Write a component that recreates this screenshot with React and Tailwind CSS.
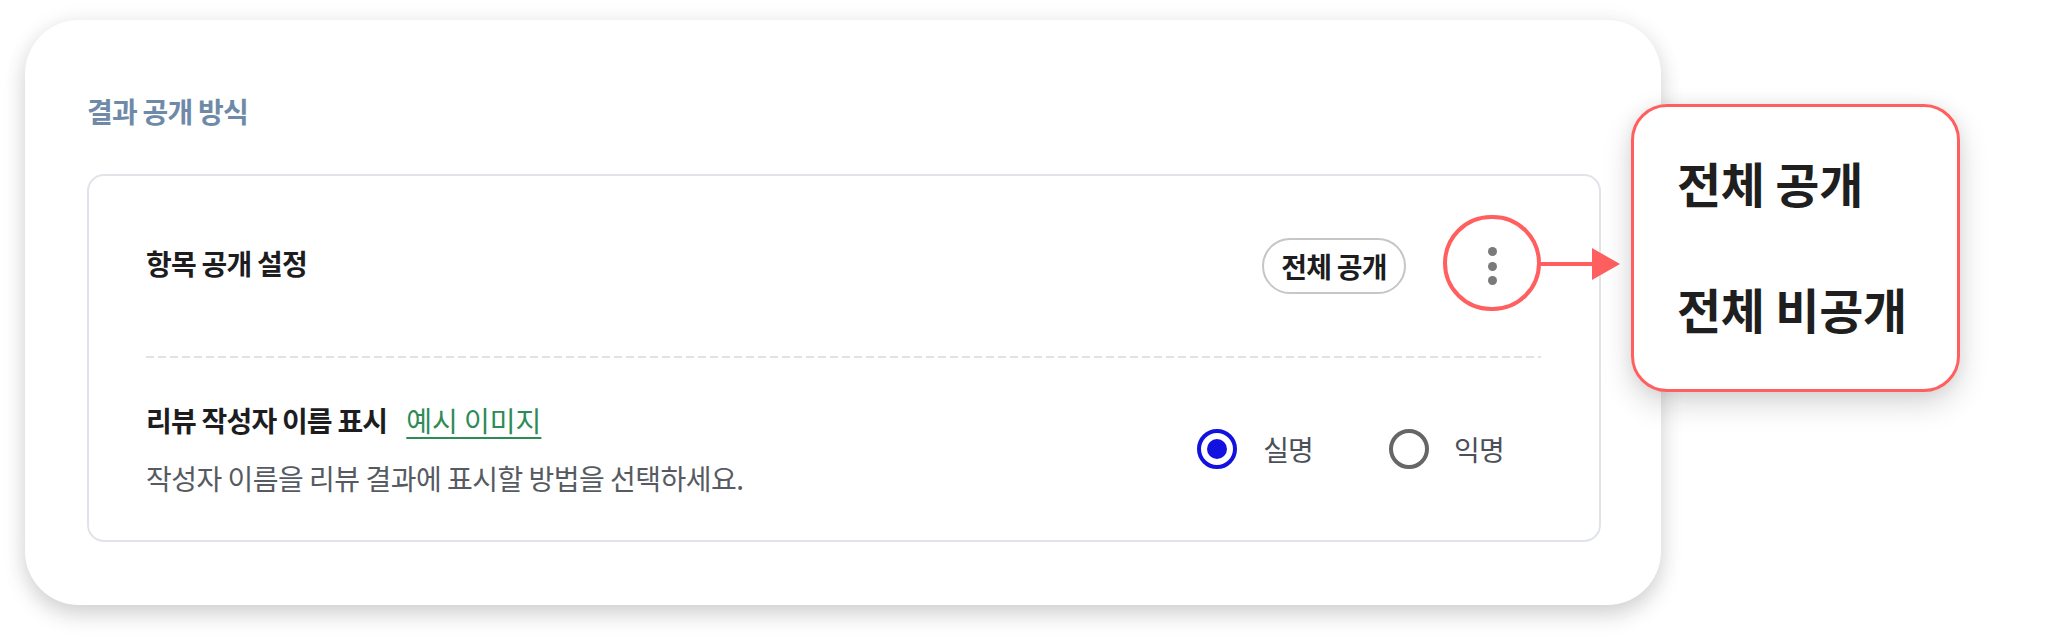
import React from "react";

const font = { fontFamily: '"Noto Sans CJK KR", "Noto Sans", sans-serif' };

export default function App() {
  return (
    <div className="min-h-screen bg-white pt-[20px] pl-[25px]" style={font}>
      <div className="w-[1636px] rounded-[54px] bg-white pt-[73px] pb-[63px] pl-[62px] pr-[60px] shadow-[0_10px_22px_rgba(0,0,0,0.16),0_0_24px_rgba(0,0,0,0.05)]">
        <h2 className="text-[28px] leading-[36px] font-bold tracking-[-0.8px] text-[#6f8aa8]">
          결과 공개 방식
        </h2>
        <div className="mt-[45px] rounded-[17px] border-2 border-[#e0e4e9] bg-white pt-[39px] pb-[44px] pl-[57px] pr-[58px]">
          <div className="flex h-[96px] items-center justify-between">
            <div className="text-[28px] leading-[36px] font-bold tracking-[-0.8px] text-[#1d1d1f]">
              항목 공개 설정
            </div>
            <div className="flex items-center gap-[37px]">
              <div className="mt-[6px] flex h-[56px] w-[144px] items-center justify-center rounded-full border-2 border-[#c6c6c6] text-[28px] font-bold tracking-[-0.8px] text-[#1d1d1f]">
                전체 공개
              </div>
              <div className="relative">
                <div className="flex h-[96px] w-[98px] items-center justify-center rounded-full border-[4px] border-[#ff605f]">
                  <div className="mt-[6px] flex flex-col items-center gap-[5.5px]">
                    <span className="h-[9px] w-[9px] rounded-full bg-[#7a7a7a]" />
                    <span className="h-[9px] w-[9px] rounded-full bg-[#7a7a7a]" />
                    <span className="h-[9px] w-[9px] rounded-full bg-[#7a7a7a]" />
                  </div>
                </div>
                <svg
                  className="absolute left-[96px] top-[32px]"
                  width="84"
                  height="34"
                  viewBox="0 0 84 34"
                >
                  <rect x="0" y="15" width="56" height="4" fill="#ff605f" />
                  <polygon points="53,1 81,17 53,33" fill="#ff605f" />
                </svg>
                <div className="absolute left-[188px] top-[-111px] z-10 flex h-[288px] w-[329px] flex-col justify-center gap-[76px] rounded-[36px] border-[3px] border-[#ff605f] bg-white pl-[43px] shadow-[0_12px_30px_rgba(0,0,0,0.16),0_0_16px_rgba(0,0,0,0.06)]">
                  <div className="mt-[-6px] text-[48px] leading-[50px] font-bold tracking-[-0.3px] text-[#1f1f1f]">
                    전체 공개
                  </div>
                  <div className="text-[48px] leading-[50px] font-bold tracking-[-0.3px] text-[#1f1f1f]">
                    전체 비공개
                  </div>
                </div>
              </div>
            </div>
          </div>

          <div className="mt-[45px] h-[2px] w-full bg-[repeating-linear-gradient(to_right,#dfe3e8_0px,#dfe3e8_8px,transparent_8px,transparent_12px)]" />

          <div className="mt-[44px] flex items-center justify-between">
            <div className="flex flex-col gap-[22px]">
              <div className="flex items-center">
                <span className="text-[28px] leading-[36px] font-bold tracking-[-0.8px] text-[#1d1d1f]">
                  리뷰 작성자 이름 표시
                </span>
                <a className="ml-[19px] text-[28px] leading-[36px] text-[#2e8b57] underline decoration-[1.5px] underline-offset-[5px]">
                  예시 이미지
                </a>
              </div>
              <div className="text-[28px] leading-[36px] tracking-[-0.5px] text-[#565b62]">
                작성자 이름을 리뷰 결과에 표시할 방법을 선택하세요.
              </div>
            </div>
            <div className="mr-[37px] flex items-center">
              <div className="flex items-center gap-[26px]">
                <span className="flex h-[40px] w-[40px] items-center justify-center rounded-full border-[4px] border-[#1212e0]">
                  <span className="h-[20px] w-[20px] rounded-full bg-[#1212e0]" />
                </span>
                <span className="text-[28px] leading-[36px] tracking-[-0.8px] text-[#4b5058]">
                  실명
                </span>
              </div>
              <div className="ml-[76px] flex items-center gap-[25px]">
                <span className="h-[40px] w-[40px] rounded-full border-[4px] border-[#666666]" />
                <span className="text-[28px] leading-[36px] tracking-[-0.8px] text-[#4b5058]">
                  익명
                </span>
              </div>
            </div>
          </div>
        </div>
      </div>
    </div>
  );
}
